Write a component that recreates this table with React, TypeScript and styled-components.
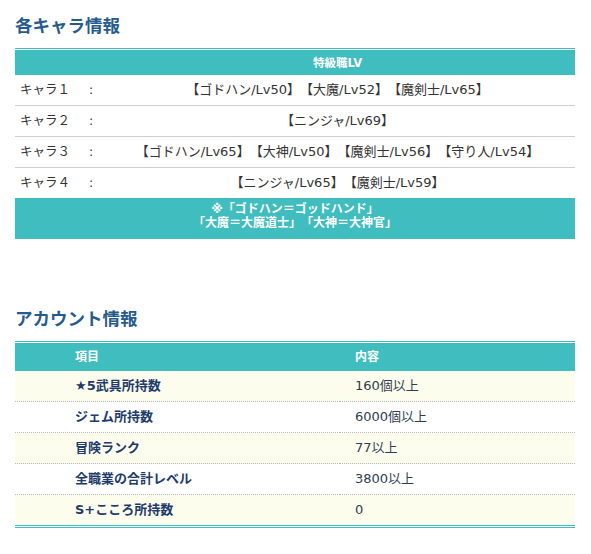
import React from "react";
import styled, { createGlobalStyle } from "styled-components";

const Global = createGlobalStyle`
  html, body { margin: 0; padding: 0; background: #fff; }
  body {
    font-family: "DejaVu Sans", "Noto Sans CJK JP", sans-serif;
    text-spacing-trim: space-all;
  }
`;

const TEAL = "#40bdbf";

const Page = styled.div`
  width: 560px;
  padding: 14px 0 0 15px;
`;

const Title = styled.h2<{ $gap?: number }>`
  margin: ${(p) => p.$gap ?? 0}px 0 10px 0;
  font-size: 17.5px;
  line-height: 24px;
  font-weight: bold;
  color: #285b8c;
`;

const CharaTable = styled.div`
  display: grid;
  grid-template-columns: 74px 11px 1fr;
  border-top: 3px double ${TEAL};
  font-size: 12.5px;
  color: #333;
`;

const CharaHead = styled.div`
  grid-column: 3;
  background: ${TEAL};
  height: 24px;
  line-height: 24px;
  text-align: center;
  color: #fff;
  font-weight: bold;
  font-size: 11.5px;
`;

const HeadBlank = styled.div`
  grid-column: 1 / 3;
  background: ${TEAL};
`;

const Cell = styled.div<{ $last?: boolean; $jobs?: boolean; $pad?: number }>`
  height: 30px;
  line-height: 30px;
  border-bottom: ${(p) => (p.$last ? "none" : "1px solid #cfcfcf")};
  text-align: ${(p) => (p.$jobs ? "center" : "left")};
  font-size: ${(p) => (p.$jobs ? 13 : 12.5)}px;
  padding-left: ${(p) => p.$pad ?? 0}px;
  white-space: nowrap;
`;

const Note = styled.div`
  grid-column: 1 / 4;
  background: ${TEAL};
  color: #fff;
  font-weight: bold;
  font-size: 12px;
  line-height: 14px;
  text-align: center;
  padding: 4px 0 9px;
`;

const AccountTable = styled.div`
  display: grid;
  grid-template-columns: 325px 1fr;
  border-top: 3px double ${TEAL};
  border-bottom: 3px double ${TEAL};
`;

const AccHead = styled.div<{ $pad: number }>`
  background: ${TEAL};
  height: 27px;
  line-height: 27px;
  padding-left: ${(p) => p.$pad}px;
  color: #fff;
  font-weight: bold;
  font-size: 12px;
`;

const AccCell = styled.div<{ $cream: boolean; $last: boolean; $item?: boolean; $pad: number }>`
  height: 30px;
  line-height: 30px;
  background: ${(p) => (p.$cream ? "#fdfdee" : "#fff")};
  border-bottom: ${(p) => (p.$last ? "none" : "1px dotted #b8b8b8")};
  padding-left: ${(p) => p.$pad}px;
  font-size: 13px;
  font-weight: ${(p) => (p.$item ? "bold" : "normal")};
  color: ${(p) => (p.$item ? "#1e3b6a" : "#2e3e50")};
  white-space: nowrap;
`;

const charas = [
  ["キャラ１", "【ゴドハン/Lv50】【大魔/Lv52】【魔剣士/Lv65】"],
  ["キャラ２", "【ニンジャ/Lv69】"],
  ["キャラ３", "【ゴドハン/Lv65】【大神/Lv50】【魔剣士/Lv56】【守り人/Lv54】"],
  ["キャラ４", "【ニンジャ/Lv65】【魔剣士/Lv59】"],
];

const account = [
  ["★5武具所持数", "160個以上"],
  ["ジェム所持数", "6000個以上"],
  ["冒険ランク", "77以上"],
  ["全職業の合計レベル", "3800以上"],
  ["S+こころ所持数", "0"],
];

export default function App() {
  return (
    <>
      <Global />
      <Page>
        <Title>各キャラ情報</Title>
        <CharaTable>
          <HeadBlank />
          <CharaHead>特級職LV</CharaHead>
          {charas.map(([name, jobs], i) => {
            const last = i === charas.length - 1;
            return (
              <React.Fragment key={name}>
                <Cell $last={last} $pad={5}>{name}</Cell>
                <Cell $last={last}>:</Cell>
                <Cell $last={last} $jobs>{jobs}</Cell>
              </React.Fragment>
            );
          })}
          <Note>
            ※「ゴドハン＝ゴッドハンド」
            <br />
            「大魔＝大魔道士」「大神＝大神官」
          </Note>
        </CharaTable>

        <Title $gap={68}>アカウント情報</Title>
        <AccountTable>
          <AccHead $pad={60}>項目</AccHead>
          <AccHead $pad={15}>内容</AccHead>
          {account.map(([item, value], i) => {
            const cream = i % 2 === 0;
            const last = i === account.length - 1;
            return (
              <React.Fragment key={item}>
                <AccCell $cream={cream} $last={last} $item $pad={60}>{item}</AccCell>
                <AccCell $cream={cream} $last={last} $pad={15}>{value}</AccCell>
              </React.Fragment>
            );
          })}
        </AccountTable>
      </Page>
    </>
  );
}
